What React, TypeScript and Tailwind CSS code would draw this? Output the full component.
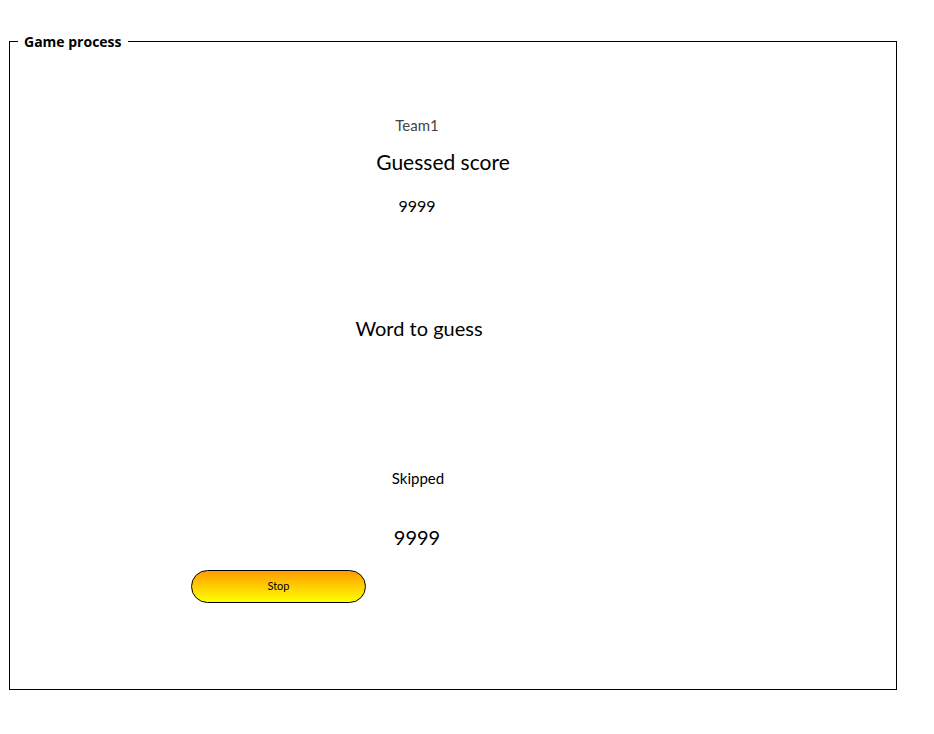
export default function App() {
  return (
    <div className="w-[934px] h-[734px] bg-white pt-[33px]" style={{ fontFamily: "Lato, 'Noto Sans', sans-serif" }}>
      <fieldset className="ml-[9px] w-[888px] h-[657px] border border-black">
        <legend className="ml-[8px] px-[6px] text-[14px] font-bold text-black leading-[17px]" style={{ fontFamily: "'Open Sans', 'Noto Sans', sans-serif" }}>
          Game process
        </legend>
        <div className="flex flex-col w-[814px] items-center">
          <div className="mt-[66px] text-[15px] leading-[18px] text-[#444]">Team1</div>
          <div className="mt-[16px] ml-[52px] text-[21px] leading-[24px] text-black">Guessed score</div>
          <div className="mt-[22px] text-[16px] leading-[20px] text-black">9999</div>
          <div className="mt-[99px] ml-[4px] text-[20px] leading-[26px] text-black">Word to guess</div>
          <div className="mt-[128px] ml-[2px] text-[15px] leading-[18px] text-black">Skipped</div>
          <div className="mt-[37px] text-[20px] leading-[26px] text-black">9999</div>
        </div>
        <button className="mt-[20px] ml-[181px] w-[175px] h-[33px] rounded-full border border-black bg-gradient-to-b from-[#ff9c00] to-[#ffff00] text-[11px] text-black">
          Stop
        </button>
      </fieldset>
    </div>
  );
}
